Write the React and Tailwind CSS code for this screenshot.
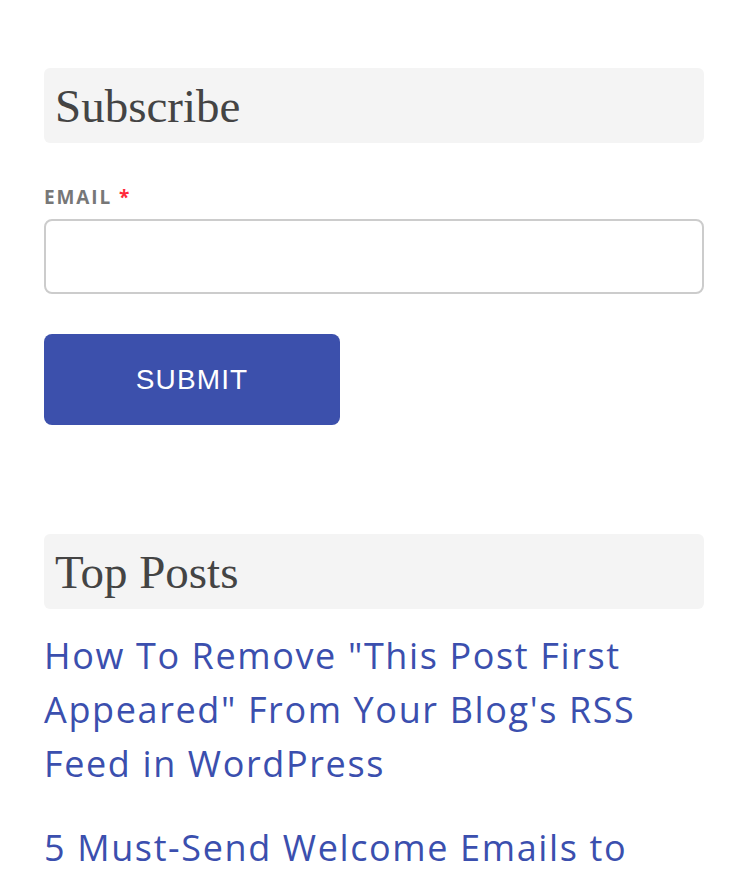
export default function App() {
  return (
    <div className="w-[732px] min-h-[886px] bg-white pt-[68px] pl-[44px] overflow-hidden">
      <div className="w-[660px]">
        <div className="h-[75px] bg-[#f4f4f4] rounded-[6px] pl-[11px] flex items-center">
          <h2 className="text-[47px] leading-none text-[#444444] pt-[2px]" style={{ fontFamily: '"Liberation Serif", "Times New Roman", serif' }}>
            Subscribe
          </h2>
        </div>
        <div className="mt-[43px]">
          <label className="block text-[19px] leading-[22px] font-bold tracking-[0.1em] text-[#777777] uppercase" style={{ fontFamily: '"Open Sans", "Liberation Sans", sans-serif' }}>
            Email <span className="text-[#ff2a3a]">*</span>
          </label>
          <input type="email" className="mt-[11px] block w-[660px] h-[75px] border-2 border-[#cccccc] rounded-[8px] outline-none" />
        </div>
        <button className="mt-[40px] w-[296px] h-[91px] bg-[#3c50ac] rounded-[8px] text-white text-[28px] tracking-[0.04em] uppercase" style={{ fontFamily: '"Liberation Sans", Arial, sans-serif' }}>
          Submit
        </button>
        <div className="mt-[109px] h-[75px] bg-[#f4f4f4] rounded-[6px] pl-[11px] flex items-center">
          <h2 className="text-[47px] leading-none text-[#444444] pt-[2px]" style={{ fontFamily: '"Liberation Serif", "Times New Roman", serif' }}>
            Top Posts
          </h2>
        </div>
        <ul className="mt-[20px] flex flex-col gap-[30px]" style={{ fontFamily: '"Open Sans", "Noto Sans", sans-serif' }}>
          <li>
            <a href="#" className="block text-[36px] leading-[54px] tracking-[0.045em] text-[#3b4fae]">
              How To Remove "This Post First Appeared" From Your Blog's RSS Feed in WordPress
            </a>
          </li>
          <li>
            <a href="#" className="block text-[36px] leading-[54px] tracking-[0.045em] text-[#3b4fae]">
              5 Must-Send Welcome Emails to New Subscribers
            </a>
          </li>
        </ul>
      </div>
    </div>
  );
}
